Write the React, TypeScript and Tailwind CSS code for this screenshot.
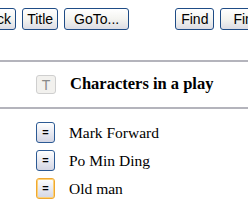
function XpButton({ label, pad }: { label: string; pad: string }) {
  return (
    <button
      className={`h-[22px] shrink-0 rounded-[3px] border border-[#1f4c86] bg-gradient-to-b from-white via-[#f4f4f0] to-[#dcdce4] text-[14px] leading-none text-black ${pad}`}
      style={{ fontFamily: '"Liberation Sans", Arial, sans-serif' }}
    >
      {label}
    </button>
  );
}

function EqButton({ active }: { active?: boolean }) {
  return (
    <div
      className={`flex h-[21px] w-[19px] shrink-0 items-center justify-center rounded-[3px] border bg-gradient-to-b from-white to-[#d4d6e4] text-[11px] font-bold leading-none text-black ${
        active ? "border-[#f0a830] shadow-[inset_0_0_0_1px_#fbd27a]" : "border-[#2c5a94]"
      }`}
      style={{ fontFamily: '"Liberation Sans", Arial, sans-serif' }}
    >
      =
    </div>
  );
}

const people = [
  { name: "Mark Forward" },
  { name: "Po Min Ding" },
  { name: "Old man", active: true },
];

export default function App() {
  return (
    <div className="h-[202px] w-[248px] overflow-hidden bg-white">
      <div className="ml-[-25px] flex items-center gap-[6px] pt-[8px]">
        <XpButton label="Back" pad="px-[4px]" />
        <XpButton label="Title" pad="px-[4px]" />
        <XpButton label="GoTo..." pad="px-[9px]" />
        <div className="w-[34px] shrink-0" />
        <XpButton label="Find" pad="px-[5px]" />
        <XpButton label="Find Next" pad="px-[12px]" />
      </div>

      <div className="mt-[30px] border-t-2 border-[#b4b4bc]" />
      <div className="flex h-[45px] items-center gap-[14px] pl-[36px]">
        <div
          className="flex h-[19px] w-[20px] items-center justify-center rounded-[3px] border border-[#cfcfcf] bg-[#f2f1ee] text-[14px] leading-none text-[#8a8a8a]"
          style={{ fontFamily: '"Liberation Sans", Arial, sans-serif' }}
        >
          T
        </div>
        <span
          className="text-[16.5px] font-bold text-black"
          style={{ fontFamily: '"Liberation Serif", "Times New Roman", serif' }}
        >
          Characters in a play
        </span>
      </div>
      <div className="border-t-2 border-[#b4b4bc]" />

      <div className="flex flex-col gap-[7px] pl-[36px] pt-[13px]">
        {people.map((p) => (
          <div key={p.name} className="flex h-[21px] items-center gap-[14px]">
            <EqButton active={p.active} />
            <span
              className="text-[15.5px] text-black"
              style={{ fontFamily: '"Liberation Serif", "Times New Roman", serif' }}
            >
              {p.name}
            </span>
          </div>
        ))}
      </div>
    </div>
  );
}
